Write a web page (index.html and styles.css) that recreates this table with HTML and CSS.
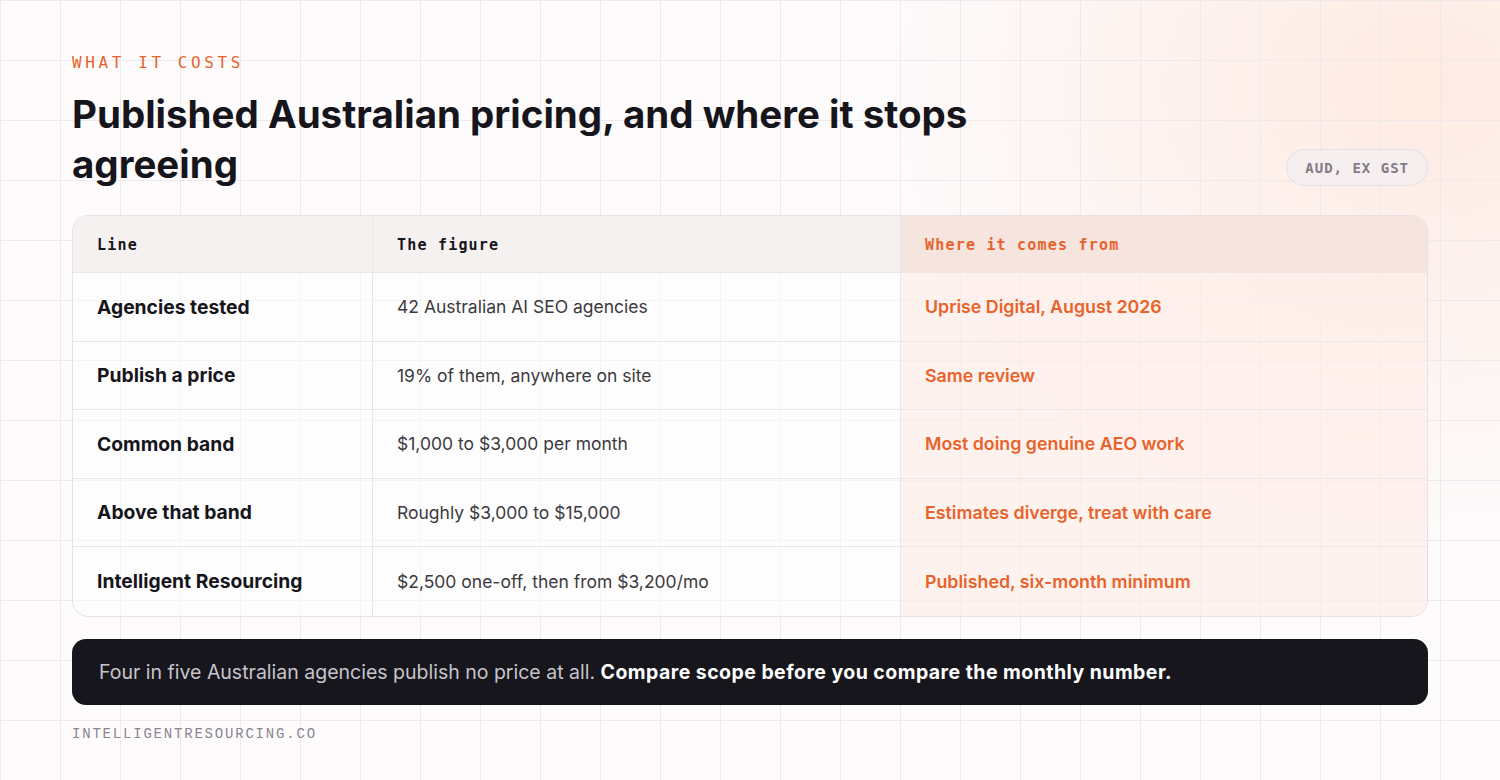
FILE: index.html
```html
<!DOCTYPE html>
<html lang="en">
<head>
<meta charset="utf-8">
<title>What it costs</title>
<link rel="stylesheet" href="styles.css">
</head>
<body>
<main class="page">
  <header class="head">
    <div class="head-text">
      <p class="eyebrow">WHAT IT COSTS</p>
      <h1 class="title">Published Australian pricing, and where it stops agreeing</h1>
    </div>
    <span class="badge">AUD, EX GST</span>
  </header>

  <section class="table">
    <div class="row row-head">
      <div class="cell">Line</div>
      <div class="cell">The figure</div>
      <div class="cell src">Where it comes from</div>
    </div>
    <div class="row">
      <div class="cell label">Agencies tested</div>
      <div class="cell fig">42 Australian AI SEO agencies</div>
      <div class="cell src">Uprise Digital, August 2026</div>
    </div>
    <div class="row">
      <div class="cell label">Publish a price</div>
      <div class="cell fig">19% of them, anywhere on site</div>
      <div class="cell src">Same review</div>
    </div>
    <div class="row">
      <div class="cell label">Common band</div>
      <div class="cell fig">$1,000 to $3,000 per month</div>
      <div class="cell src">Most doing genuine AEO work</div>
    </div>
    <div class="row">
      <div class="cell label">Above that band</div>
      <div class="cell fig">Roughly $3,000 to $15,000</div>
      <div class="cell src">Estimates diverge, treat with care</div>
    </div>
    <div class="row row-last">
      <div class="cell label">Intelligent Resourcing</div>
      <div class="cell fig">$2,500 one-off, then from $3,200/mo</div>
      <div class="cell src">Published, six-month minimum</div>
    </div>
  </section>

  <p class="callout">Four in five Australian agencies publish no price at all. <strong>Compare scope before you compare the monthly number.</strong></p>

  <footer class="foot">INTELLIGENTRESOURCING.CO</footer>
</main>
</body>
</html>
```

FILE: styles.css
```css
* { box-sizing: border-box; }

html, body {
  margin: 0;
  height: 100%;
}

body {
  width: 1500px;
  height: 780px;
  overflow: hidden;
  font-family: "Inter", "Noto Sans", sans-serif;
  color: #17151c;
  background-color: #fdfbfc;
  background-image:
    linear-gradient(to right, #efe9ec 1px, transparent 1px),
    linear-gradient(to bottom, #efe9ec 1px, transparent 1px),
    radial-gradient(ellipse 560px 460px at 1420px 90px, rgba(255, 224, 210, 0.6), rgba(255, 224, 210, 0) 100%);
  background-size: 60px 60px, 60px 60px, 100% 100%;
  background-position: 0 0, 0 0, 0 0;
}

.page {
  padding: 53px 72px 0 72px;
  display: flex;
  flex-direction: column;
}

.head {
  display: flex;
  justify-content: space-between;
  align-items: flex-end;
}

.eyebrow {
  margin: 0;
  font-family: "DejaVu Sans Mono", "Liberation Mono", monospace;
  font-size: 16px;
  line-height: 20px;
  letter-spacing: 3.6px;
  color: #e8632b;
}

.title {
  margin: 16px 0 0 0;
  max-width: 960px;
  font-size: 38.5px;
  line-height: 50px;
  font-weight: 700;
  letter-spacing: 0;
  color: #17151c;
}

.badge {
  margin-bottom: 3px;
  height: 37px;
  padding: 0 18px;
  display: flex;
  align-items: center;
  border-radius: 19px;
  border: 1.5px solid #e6dfe3;
  background: rgba(244, 238, 241, 0.85);
  font-family: "DejaVu Sans Mono", "Liberation Mono", monospace;
  font-weight: 700;
  font-size: 14px;
  letter-spacing: 1px;
  color: #857a86;
}

.table {
  margin-top: 26px;
  border: 1.5px solid #e7e1e4;
  border-radius: 16px;
  overflow: hidden;
  background: rgba(255, 255, 255, 0.45);
}

.row {
  display: grid;
  grid-template-columns: 300px 528px 1fr;
  height: 68.5px;
  border-bottom: 1.5px solid #ebe6e8;
}

.row-last { border-bottom: none; }

.cell {
  display: flex;
  align-items: center;
  padding: 0 24px;
  border-right: 1.5px solid #ebe6e8;
}

.cell.src {
  border-right: none;
  background: rgba(255, 228, 219, 0.45);
  color: #e8632b;
  font-weight: 600;
  font-size: 17.8px;
}

.row-head {
  height: 57px;
  background: rgba(245, 240, 240, 0.9);
}

.row-head .cell {
  padding-top: 2px;
  font-family: "DejaVu Sans Mono", "Liberation Mono", monospace;
  font-weight: 700;
  font-size: 15px;
  letter-spacing: 1.2px;
  color: #17151c;
}

.row-head .cell.src {
  background: #f6e4df;
  color: #e8632b;
  font-size: 15px;
}

.label {
  font-weight: 700;
  font-size: 19.3px;
  color: #17151c;
}

.fig {
  font-size: 17.5px;
  color: #3d393f;
}

.callout {
  margin: 22px 0 0 0;
  height: 66px;
  display: flex;
  align-items: center;
  padding: 0 27px;
  border-radius: 14px;
  background: #17161d;
  color: #c7c4cb;
  font-size: 19.5px;
  white-space: pre;
}

.callout strong {
  color: #ffffff;
  font-weight: 700;
  letter-spacing: 0.45px;
}

.foot {
  margin-top: 21px;
  font-family: "Liberation Mono", "DejaVu Sans Mono", monospace;
  font-size: 14px;
  letter-spacing: 1.8px;
  color: #8a8590;
}
```
